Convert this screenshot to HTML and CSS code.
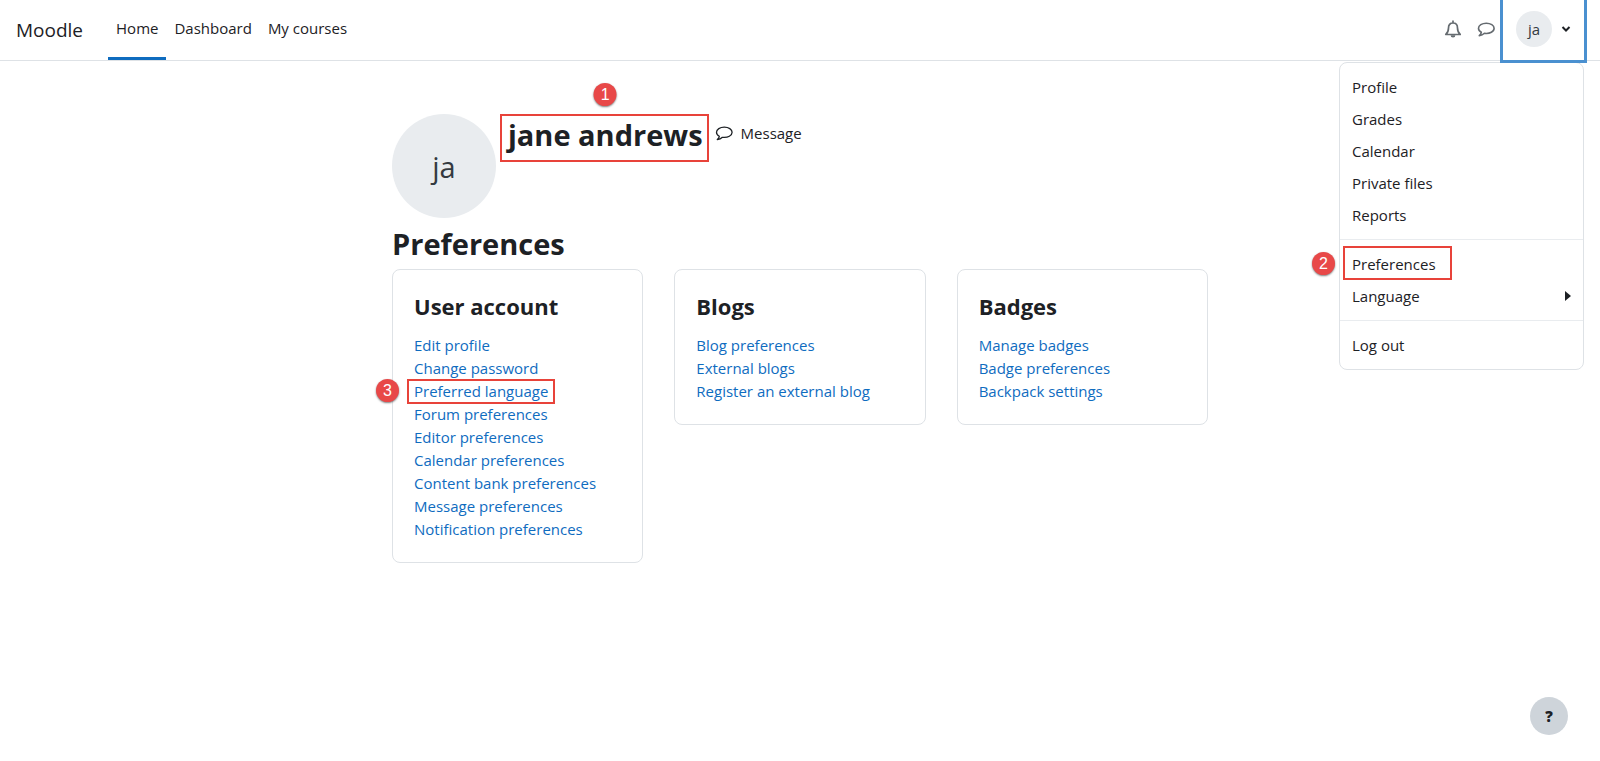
FILE: index.html
```html
<!DOCTYPE html>
<html lang="en">
<head>
    <meta charset="UTF-8">
    <meta name="viewport" content="width=device-width, initial-scale=1.0">
    <title>Preferences | Moodle</title>
    <link rel="stylesheet" href="styles.css">
</head>
<body>
    <header class="navbar">
        <a class="brand" href="#">Moodle</a>
        <nav class="main-nav">
            <a class="active" href="#">Home</a>
            <a href="#">Dashboard</a>
            <a href="#">My courses</a>
        </nav>
        <div class="nav-tools">
            <button class="icon-button" aria-label="Notifications">
                <svg width="18" height="18" viewBox="0 0 18 18" fill="none" stroke="#656b70" stroke-width="1.700" stroke-linejoin="round">
                    <path d="M9 .5v2.500M9 3C6 3 4.500 5 4.500 8C4.500 11.500 3.500 13 1.800 14.500H16.200C14.500 13 13.500 11.500 13.500 8C13.500 5 12 3 9 3Z"/>
                    <path d="M6.600 15.200h4.800a2.400 2.400 0 0 1-4.800 0z" fill="#656b70" stroke="none"/>
                </svg>
            </button>
            <button class="icon-button" aria-label="Messages">
                <svg width="18" height="18" viewBox="0 0 18 18" fill="none" stroke="#656b70" stroke-width="1.600" stroke-linejoin="round">
                    <path d="M9.300 3.200C5 3.200 1.500 5.400 1.500 8.300C1.500 10 2.600 11.400 4.300 12.300C4.100 13.700 3.300 14.700 2.300 15.600C4.500 15.500 6.200 14.600 7.400 13.300C13 14 17.100 11.600 17.100 8.300C17.100 5.400 13.600 3.200 9.300 3.200Z"/>
                </svg>
            </button>
            <div class="user-menu">
                <button class="user-toggle" aria-expanded="true" aria-label="User menu">
                    <span class="avatar avatar-small">ja</span>
                    <svg width="10" height="8" viewBox="0 0 10 8" fill="none" stroke="#1d2125" stroke-width="2">
                        <path d="M1.500 2l3.500 3.500L8.500 2"/>
                    </svg>
                </button>
                <div class="dropdown">
                    <a href="#">Profile</a>
                    <a href="#">Grades</a>
                    <a href="#">Calendar</a>
                    <a href="#">Private files</a>
                    <a href="#">Reports</a>
                    <hr>
                    <a class="marked marked-menu" href="#">Preferences<span class="step">2</span></a>
                    <a class="has-submenu" href="#">Language
                        <svg width="6" height="10" viewBox="0 0 6 10"><path d="M0 0l6 5-6 5z" fill="#1d2125"/></svg>
                    </a>
                    <hr>
                    <a href="#">Log out</a>
                </div>
            </div>
        </div>
    </header>

    <main class="page">
        <div class="profile">
            <span class="avatar avatar-large">ja</span>
            <h1 class="marked marked-name">jane andrews<span class="step">1</span></h1>
            <a class="message-link" href="#">
                <svg width="18" height="18" viewBox="0 0 18 18" fill="none" stroke="#1d2125" stroke-width="1.300" stroke-linejoin="round">
                    <path d="M9.300 3.200C5 3.200 1.500 5.400 1.500 8.300C1.500 10 2.600 11.400 4.300 12.300C4.100 13.700 3.300 14.700 2.300 15.600C4.500 15.500 6.200 14.600 7.400 13.300C13 14 17.100 11.600 17.100 8.300C17.100 5.400 13.600 3.200 9.300 3.200Z"/>
                </svg>
                Message
            </a>
        </div>

        <h2>Preferences</h2>

        <div class="cards">
            <section class="card">
                <h3>User account</h3>
                <ul>
                    <li><a href="#">Edit profile</a></li>
                    <li><a href="#">Change password</a></li>
                    <li><a class="marked marked-link" href="#">Preferred language<span class="step">3</span></a></li>
                    <li><a href="#">Forum preferences</a></li>
                    <li><a href="#">Editor preferences</a></li>
                    <li><a href="#">Calendar preferences</a></li>
                    <li><a href="#">Content bank preferences</a></li>
                    <li><a href="#">Message preferences</a></li>
                    <li><a href="#">Notification preferences</a></li>
                </ul>
            </section>
            <section class="card">
                <h3>Blogs</h3>
                <ul>
                    <li><a href="#">Blog preferences</a></li>
                    <li><a href="#">External blogs</a></li>
                    <li><a href="#">Register an external blog</a></li>
                </ul>
            </section>
            <section class="card">
                <h3>Badges</h3>
                <ul>
                    <li><a href="#">Manage badges</a></li>
                    <li><a href="#">Badge preferences</a></li>
                    <li><a href="#">Backpack settings</a></li>
                </ul>
            </section>
        </div>
    </main>

    <button class="help-button" aria-label="Help">?</button>
</body>
</html>
```
FILE: styles.css
```css
* {
    box-sizing: border-box;
}

body {
    margin: 0;
    font-family: "Segoe UI", "Open Sans", "Noto Sans", sans-serif;
    font-size: 15px;
    line-height: 23px;
    color: #1d2125;
    background-color: #fff;
}

a {
    color: #0f6cbf;
    text-decoration: none;
}

a:hover {
    text-decoration: underline;
}

button {
    font: inherit;
    color: inherit;
    border: none;
    background: none;
    padding: 0;
    cursor: pointer;
}

h1, h2, h3 {
    margin: 0;
    font-weight: 700;
}

h1, h2 {
    font-size: 29px;
    line-height: 38px;
}

/* Navbar */
.navbar {
    display: flex;
    height: 61px;
    padding: 0 16px;
    border-bottom: 1px solid #dee2e6;
}

.brand {
    display: flex;
    align-items: center;
    margin-right: 25px;
    font-size: 19px;
    color: #1d2125;
}

.main-nav {
    display: flex;
}

.main-nav a {
    display: flex;
    align-items: center;
    padding: 0 8px;
    color: #1d2125;
    border-bottom: 3px solid transparent;
}

.main-nav a.active {
    border-bottom-color: #0f6cbf;
}

.nav-tools {
    display: flex;
    margin-left: auto;
}

.icon-button {
    display: flex;
    align-items: center;
    padding: 0 8px 2px;
}

.icon-button + .icon-button {
    padding-left: 7px;
}

.user-menu {
    position: relative;
}

.user-toggle {
    position: relative;
    z-index: 2;
    display: flex;
    align-items: center;
    gap: 9px;
    height: 60px;
    padding: 0 13px 2px;
    box-shadow: 0 0 0 3px #4a90d0;
}

.avatar {
    display: flex;
    flex-shrink: 0;
    align-items: center;
    justify-content: center;
    border-radius: 50%;
    background-color: #e9ecef;
    color: #343a40;
}

.avatar-small {
    width: 36px;
    height: 36px;
}

.avatar-large {
    width: 104px;
    height: 104px;
    font-size: 29px;
}

/* User dropdown */
.dropdown {
    position: absolute;
    top: 62px;
    right: 0;
    width: 245px;
    padding: 8px 0;
    border: 1px solid #dee2e6;
    border-radius: 8px;
    background-color: #fff;
}

.dropdown a {
    display: flex;
    align-items: center;
    height: 32px;
    padding: 0 12px;
    color: #1d2125;
}

.dropdown .has-submenu {
    justify-content: space-between;
}

.dropdown hr {
    height: 1px;
    margin: 8px 0;
    border: none;
    background-color: #e9ecef;
}

/* Page */
.page {
    max-width: 848px;
    margin: 0 auto;
    padding: 53px 16px 24px;
}

.profile {
    display: flex;
    align-items: flex-start;
}

.profile h1 {
    margin-left: 12px;
    line-height: 42px;
}

.message-link {
    display: flex;
    align-items: center;
    gap: 8px;
    margin-left: 12px;
    line-height: 38px;
    color: #1d2125;
}

.page h2 {
    margin: 7px 0 6px;
}

.cards {
    display: grid;
    grid-template-columns: repeat(3, 1fr);
    align-items: start;
    gap: 31px;
}

.card {
    padding: 21px;
    border: 1px solid #dee2e6;
    border-radius: 8px;
}

.card h3 {
    margin-bottom: 12px;
    font-size: 22px;
    line-height: 31px;
}

.card ul {
    margin: 0;
    padding: 0;
    list-style: none;
}

/* Numbered steps with a red frame round the item */
.marked {
    position: relative;
}

.marked::after {
    content: "";
    position: absolute;
    border: 2px solid #e8433a;
}

.marked-name::after {
    inset: 0 -6px -6px -8px;
}

.marked-menu::after {
    top: -2px;
    bottom: 0;
    left: 3px;
    width: 105px;
}

.marked-link::after {
    inset: -2px -7px -3px -7px;
}

.step {
    position: absolute;
    width: 23px;
    height: 23px;
    border-radius: 50%;
    background-color: #e84848;
    box-shadow: 0 1px 2px rgba(0, 0, 0, 0.5);
    color: #fff;
    font-family: "Liberation Sans", Arial, sans-serif;
    font-size: 16px;
    font-weight: 400;
    line-height: 23px;
    text-align: center;
}

.marked-name .step {
    top: -31px;
    left: 50%;
    transform: translateX(-50%);
}

.marked-menu .step {
    top: 4px;
    left: -28px;
}

.marked-link .step {
    top: -2px;
    left: -38px;
}

.help-button {
    position: fixed;
    right: 32px;
    bottom: 26px;
    width: 38px;
    height: 38px;
    border-radius: 50%;
    background-color: #ced4da;
    font-weight: 800;
}
```
